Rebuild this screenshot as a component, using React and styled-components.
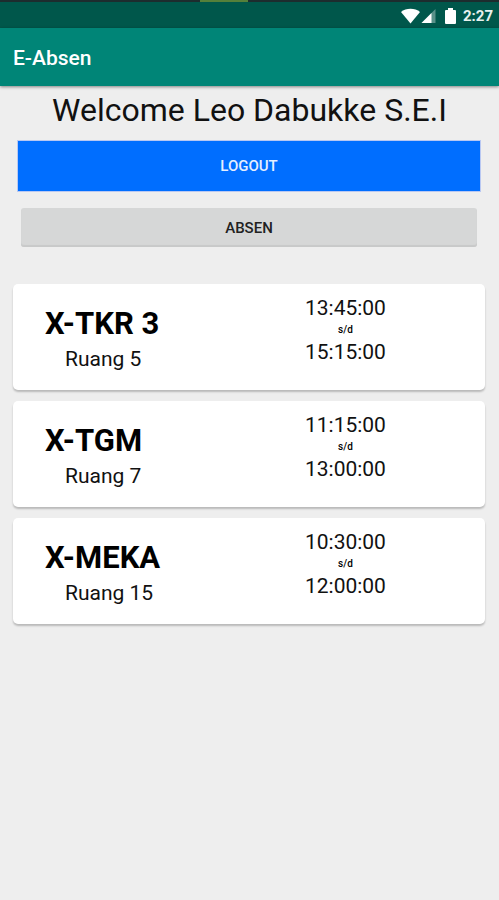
/*
* E-Absen home screen: a welcome line, two actions and the list of today's classes
*/
import React from 'react';
import styled, { createGlobalStyle } from 'styled-components'

const GlobalStyle = createGlobalStyle`
    body {
        margin: 0;
        background-color: #eeeeee;
        color: #111;
        font-family: Roboto, sans-serif;
    }
    * {
        box-sizing: border-box;
    }
`

const classes = [
    { name: 'X-TKR 3', room: 'Ruang 5', start: '13:45:00', end: '15:15:00' },
    { name: 'X-TGM', room: 'Ruang 7', start: '11:15:00', end: '13:00:00' },
    { name: 'X-MEKA', room: 'Ruang 15', start: '10:30:00', end: '12:00:00' }
]

const TopStrip = styled.div`
    display: flex;
    justify-content: center;
    height: 2px;
    background-color: #1d2c2e;
`
const StripMark = styled.div`
    width: 48px;
    margin-right: 51px;
    background-color: #55803a;
`
const StatusBar = styled.div`
    display: flex;
    align-items: center;
    justify-content: flex-end;
    height: 26px;
    padding: 2px 6px 0 0;
    background-color: #00574b;
    color: #e8f1ef;
    svg {
        display: block;
    }
`
const StatusIcons = styled.div`
    display: flex;
    align-items: center;
    gap: 1px;
    svg:last-child {
        margin-left: 8px;
    }
`
const Clock = styled.span`
    margin-left: 7px;
    font-size: 15px;
    font-weight: 700;
    line-height: 18px;
`
const AppBar = styled.header`
    display: flex;
    align-items: center;
    height: 58px;
    padding: 2px 13px 0;
    background-color: #008577;
    box-shadow: 0 1px 3px rgba(0, 0, 0, 0.45);
    color: #fff;
`
const AppTitle = styled.div`
    font-size: 21px;
    font-weight: 500;
    line-height: 24px;
`
const Welcome = styled.h1`
    margin: 6px 0 12px;
    font-size: 32px;
    font-weight: 400;
    line-height: 37px;
    text-align: center;
`
const Actions = styled.div`
    display: flex;
    flex-direction: column;
    gap: 17px;
    padding: 0 19px 0 18px;
`
const Button = styled.button`
    border: 0;
    padding: 0;
    font-family: inherit;
    font-size: 15px;
    font-weight: 500;
    line-height: 16px;
`
const LogoutButton = styled(Button)`
    height: 50px;
    background-color: #006eff;
    box-shadow: 0 0 0 1px #b9c8f2;
    color: #e6efff;
`
const AbsenButton = styled(Button)`
    height: 39px;
    margin: 0 3px;
    border-radius: 3px;
    background-color: #d6d7d7;
    box-shadow: inset 0 -2px 1px #c8c9c9;
    color: #222;
`
const ClassList = styled.main`
    display: flex;
    flex-direction: column;
    gap: 11px;
    padding: 37px 14px 24px 13px;
`
const Card = styled.section`
    display: grid;
    grid-template-columns: 4fr 5fr;
    align-items: start;
    padding: 12px 24px 19px 32px;
    border-radius: 5px;
    background-color: #fff;
    box-shadow: 0 2px 2px rgba(0, 0, 0, 0.22);
`
const ClassName = styled.h2`
    margin: 9px 0 5px;
    font-size: 31px;
    font-weight: 700;
    line-height: 37px;
    color: #000;
`
const Room = styled.div`
    padding-left: 20px;
    font-size: 21px;
    line-height: 24px;
`
const Times = styled.div`
    display: flex;
    flex-direction: column;
    align-items: center;
    font-size: 21px;
    line-height: 24px;
`
const Until = styled.span`
    font-size: 10px;
    font-weight: 500;
    line-height: 20px;
    color: #000;
`

const WifiIcon = () => (
    <svg width="20" height="16" viewBox="0 0 20 16" aria-hidden="true">
        <path d="M10.500 15.500 L1 4 C6 -0.3 15 -0.3 20 4 Z" fill="#fff" />
    </svg>
)

const SignalIcon = () => (
    <svg width="15" height="15" viewBox="0 0 15 15" aria-hidden="true">
        <path d="M0.5 14 L14.5 0 V14 Z" fill="#fff" opacity="0.35" />
        <path d="M0.5 14 L10.5 4 V14 Z" fill="#fff" />
    </svg>
)

const BatteryIcon = () => (
    <svg width="11" height="16" viewBox="0 0 11 16" aria-hidden="true">
        <path d="M3 0 H8 V2 H10 Q11 2 11 3 V15 Q11 16 10 16 H1 Q0 16 0 15 V3 Q0 2 1 2 H3 Z" fill="#fff" />
    </svg>
)

/**
 * Generates the card of one class
 * @param {object} props.item The class, with its name, room, start and end
 * @returns the card
 */
const ClassCard = ({ item }) => {
    return (
        <Card>
            <div>
                <ClassName>{item.name}</ClassName>
                <Room>{item.room}</Room>
            </div>
            <Times>
                <span>{item.start}</span>
                <Until>s/d</Until>
                <span>{item.end}</span>
            </Times>
        </Card>
    )
}

const App = () => {
    return (
        <>
            <GlobalStyle />
            <TopStrip><StripMark /></TopStrip>
            <StatusBar>
                <StatusIcons>
                    <WifiIcon />
                    <SignalIcon />
                    <BatteryIcon />
                </StatusIcons>
                <Clock>2:27</Clock>
            </StatusBar>
            <AppBar>
                <AppTitle>E-Absen</AppTitle>
            </AppBar>
            <Welcome>Welcome Leo Dabukke S.E.I</Welcome>
            <Actions>
                <LogoutButton type="button">LOGOUT</LogoutButton>
                <AbsenButton type="button">ABSEN</AbsenButton>
            </Actions>
            <ClassList>
                {classes.map(item => <ClassCard item={item} key={item.name} />)}
            </ClassList>
        </>
    )
}

export default App;
